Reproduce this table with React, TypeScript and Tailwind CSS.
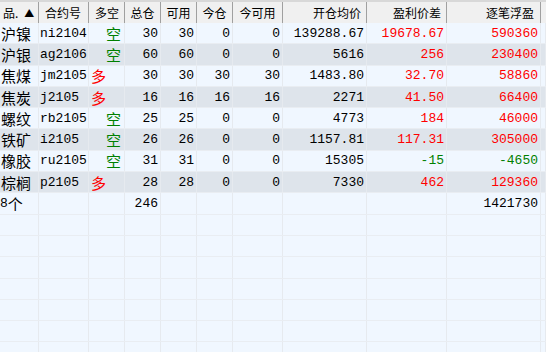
import React from "react";

type Row = {
  name: string;
  code: string;
  side: "多" | "空";
  total: string;
  avail: string;
  today: string;
  todayAvail: string;
  avg: string;
  diff: string;
  pnl: string;
};

const rows: Row[] = [
  { name: "沪镍", code: "ni2104", side: "空", total: "30", avail: "30", today: "0", todayAvail: "0", avg: "139288.67", diff: "19678.67", pnl: "590360" },
  { name: "沪银", code: "ag2106", side: "空", total: "60", avail: "60", today: "0", todayAvail: "0", avg: "5616", diff: "256", pnl: "230400" },
  { name: "焦煤", code: "jm2105", side: "多", total: "30", avail: "30", today: "30", todayAvail: "30", avg: "1483.80", diff: "32.70", pnl: "58860" },
  { name: "焦炭", code: "j2105", side: "多", total: "16", avail: "16", today: "16", todayAvail: "16", avg: "2271", diff: "41.50", pnl: "66400" },
  { name: "螺纹", code: "rb2105", side: "空", total: "25", avail: "25", today: "0", todayAvail: "0", avg: "4773", diff: "184", pnl: "46000" },
  { name: "铁矿", code: "i2105", side: "空", total: "26", avail: "26", today: "0", todayAvail: "0", avg: "1157.81", diff: "117.31", pnl: "305000" },
  { name: "橡胶", code: "ru2105", side: "空", total: "31", avail: "31", today: "0", todayAvail: "0", avg: "15305", diff: "-15", pnl: "-4650" },
  { name: "棕榈", code: "p2105", side: "多", total: "28", avail: "28", today: "0", todayAvail: "0", avg: "7330", diff: "462", pnl: "129360" },
];

const grid =
  "grid grid-cols-[39px_50px_36px_36px_36px_36px_50px_84px_80px_94px_1fr]";

const mono = "font-['Liberation_Mono',monospace] text-[13px]";
const cjk = "font-['Noto_Sans_CJK_SC',sans-serif] text-[15px]";

function Num({ v, color = "text-black" }: { v: string; color?: string }) {
  return (
    <div className={`flex items-center justify-end pr-[2px] border-r border-[#e6eaef] ${mono} ${color}`}>
      {v}
    </div>
  );
}

function Empty() {
  return <div className="border-r border-[#e6eaef]" />;
}

export default function App() {
  const pnlColor = (v: string) => (v.startsWith("-") ? "text-[#008000]" : "text-[#ff0000]");
  const head = "flex items-center border-r border-[#a0a0a0] text-[12px] text-black font-['Noto_Sans_CJK_SC',sans-serif]";
  const fillers = Array.from({ length: 7 });

  return (
    <div className="w-[546px] h-[352px] overflow-hidden bg-[#f0f7ff] leading-none">
      {/* header */}
      <div className={`${grid} h-[23px] bg-[#f0f0f0] border-t-2 border-[#d8d8d8]`}>
        <div className={`${head} pl-[3px] gap-[6px]`}>
          <span>品.</span>
          <span className="text-[10px]">▲</span>
        </div>
        <div className={`${head} pl-[6px]`}>合约号</div>
        <div className={`${head} pl-[6px]`}>多空</div>
        <div className={`${head} justify-center`}>总仓</div>
        <div className={`${head} justify-center`}>可用</div>
        <div className={`${head} justify-center`}>今仓</div>
        <div className={`${head} justify-center`}>今可用</div>
        <div className={`${head} justify-end pr-[5px]`}>开仓均价</div>
        <div className={`${head} justify-end pr-[5px]`}>盈利价差</div>
        <div className={`${head} justify-end pr-[6px]`}>逐笔浮盈</div>
        <div />
      </div>

      {/* positions */}
      {rows.map((r, i) => (
        <div
          key={r.code}
          className={`${grid} h-[21.3px] border-b border-[#e9edf2] ${i % 2 === 1 ? "bg-[#dee4eb]" : "bg-[#f0f7ff]"}`}
        >
          <div className={`flex items-center pl-[1px] border-r border-[#e6eaef] text-black ${cjk}`}>{r.name}</div>
          <div className={`flex items-center pl-[1px] border-r border-[#e6eaef] text-black ${mono}`}>{r.code}</div>
          {r.side === "多" ? (
            <div className={`flex items-center pl-[2px] border-r border-[#e6eaef] text-[#ff0000] ${cjk}`}>多</div>
          ) : (
            <div className={`flex items-center justify-end pr-[3px] border-r border-[#e6eaef] text-[#008000] ${cjk}`}>空</div>
          )}
          <Num v={r.total} />
          <Num v={r.avail} />
          <Num v={r.today} />
          <Num v={r.todayAvail} />
          <Num v={r.avg} />
          <Num v={r.diff} color={pnlColor(r.diff)} />
          <Num v={r.pnl} color={pnlColor(r.pnl)} />
          <Empty />
        </div>
      ))}

      {/* total row */}
      <div className={`${grid} h-[21.3px] border-b border-[#e9edf2]`}>
        <div className="flex items-center border-r border-[#e6eaef] text-black">
          <span className={mono}>8</span>
          <span className={cjk}>个</span>
        </div>
        <Empty />
        <Empty />
        <Num v="246" />
        <Empty />
        <Empty />
        <Empty />
        <Empty />
        <Empty />
        <Num v="1421730" />
        <Empty />
      </div>

      {/* empty rows */}
      {fillers.map((_, i) => (
        <div key={i} className={`${grid} h-[21.3px] border-b border-[#e9edf2]`}>
          {Array.from({ length: 11 }).map((__, j) => (
            <Empty key={j} />
          ))}
        </div>
      ))}
    </div>
  );
}
